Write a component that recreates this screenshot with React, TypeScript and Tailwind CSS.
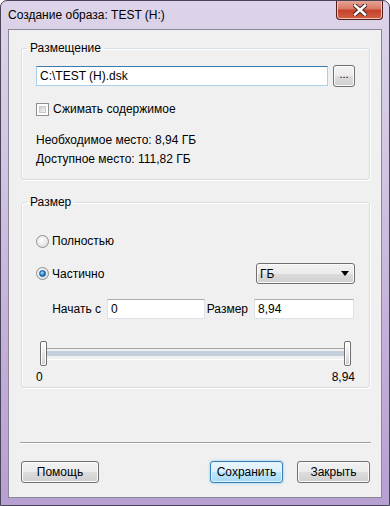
import React from "react"

const ui = "font-['Segoe_UI','Liberation_Sans',sans-serif] text-[12px] leading-[16px] text-black"

function WinButton({ children, primary, className = "" }: { children: React.ReactNode; primary?: boolean; className?: string }) {
  return (
    <button
      className={`h-[22px] rounded-[3px] border flex items-center justify-center ${
        primary
          ? "border-[#3c7fb1] bg-[linear-gradient(to_bottom,#eaf6fd_0%,#d9f0fc_50%,#bee6fd_51%,#a7d9f5_100%)] shadow-[inset_0_0_0_1px_#dcf2fc,0_0_3px_#7dcdf2]"
          : "border-[#707070] bg-[linear-gradient(to_bottom,#f2f2f2_0%,#ebebeb_50%,#dddddd_51%,#cfcfcf_100%)] shadow-[inset_0_0_0_1px_#fbfbfb]"
      } ${className}`}
    >
      {children}
    </button>
  )
}

function TextBox({ value, focused, className = "" }: { value: string; focused?: boolean; className?: string }) {
  return (
    <div
      className={`h-[20px] bg-white border flex items-center pl-[3px] ${
        focused
          ? "border-[#a9d0ea] border-t-[#3d7bad]"
          : "border-[#dde1e8] border-t-[#abadb3]"
      } ${className}`}
    >
      {value}
    </div>
  )
}

function Radio({ checked }: { checked?: boolean }) {
  return (
    <span className="w-[13px] h-[13px] rounded-full border border-[#8e8f8f] bg-[radial-gradient(circle_at_40%_40%,#ffffff,#d6d6d6)] flex items-center justify-center">
      {checked && (
        <span className="w-[7px] h-[7px] rounded-full bg-[radial-gradient(circle_at_40%_35%,#b8e6ff_0%,#2a8ad4_50%,#0b4f96_100%)] border border-[#10508f]" />
      )}
    </span>
  )
}

function Thumb() {
  return <span className="w-[7px] h-[25px] rounded-[2px] border border-[#6f6f6f] bg-[linear-gradient(to_bottom,#fefefe,#e4e4e4_60%,#cfcfcf)] shadow-[inset_0_0_0_1px_#ffffff]" />
}

function Group({ title, children }: { title: string; children: React.ReactNode }) {
  return (
    <fieldset className="border border-[#d5dfe5] rounded-[3px] shadow-[inset_1px_1px_0_#ffffff,1px_1px_0_#ffffff]">
      <legend className="ml-[5px] px-[3px] leading-[15px]">{title}</legend>
      <div className="px-[14px]">{children}</div>
    </fieldset>
  )
}

export default function App() {
  return (
    <div className={`${ui} w-[390px] h-[506px] flex flex-col rounded-t-[7px] border border-[#4a4458] bg-[linear-gradient(to_bottom,#ddd4e9_0%,#d3c6e3_30%,#c2aed9_70%,#b7a0d2_100%)] overflow-hidden`}>
      {/* title bar */}
      <div className="h-[28px] flex shrink-0">
        <div className="flex-1 pl-[7px] pt-[6px] text-[12px]">Создание образа: TEST (H:)</div>
        <button className="w-[47px] h-[20px] mr-[6px] -mt-px rounded-b-[4px] border border-[#4e1d1d] border-t-0 bg-[linear-gradient(to_bottom,#e9a99b_0%,#d97a66_45%,#c4412c_55%,#d4613f_100%)] shadow-[inset_0_0_0_1px_#f3c3b5] flex items-center justify-center">
          <svg width="14" height="12" viewBox="0 0 14 12">
            <path d="M2 1.5 L12 10.5 M12 1.5 L2 10.5" stroke="#4a2424" strokeWidth="4.5" strokeLinecap="square" />
            <path d="M2 1.5 L12 10.5 M12 1.5 L2 10.5" stroke="#ffffff" strokeWidth="2.5" strokeLinecap="square" />
          </svg>
        </button>
      </div>

      {/* client area */}
      <div className="flex-1 mx-[7px] mb-[7px] border border-[#8c8796] bg-[#f0f0f0] pl-[12px] pr-[11px] pt-[11px] pb-[13px] flex flex-col">
        <Group title="Размещение">
          <div className="mt-[9px] flex items-center gap-[5px]">
            <TextBox value="C:\TEST (H).dsk" focused className="flex-1" />
            <WinButton className="w-[22px] h-[18px] text-[11px] leading-none pb-[4px]">...</WinButton>
          </div>
          <div className="mt-[14px] flex items-center gap-[4px] h-[16px]">
            <span className="w-[13px] h-[13px] border border-[#8e8f8f] bg-white p-[2px] flex">
              <span className="flex-1 border border-[#c7c9cc] bg-[linear-gradient(135deg,#c9ccd1,#f4f4f4)]" />
            </span>
            Сжимать содержимое
          </div>
          <div className="mt-[15px]">Необходимое место: 8,94 ГБ</div>
          <div className="mt-[3px] pb-[12px]">Доступное место: 111,82 ГБ</div>
        </Group>

        <div className="mt-[15px]">
          <Group title="Размер">
            <div className="mt-[23px] flex items-center gap-[3px] h-[16px]">
              <Radio />
              Полностью
            </div>
            <div className="mt-[14px] flex items-center h-[21px]">
              <div className="flex items-center gap-[3px] flex-1">
                <Radio checked />
                Частично
              </div>
              <div className="w-[99px] h-[21px] rounded-[3px] border border-[#707070] bg-[linear-gradient(to_bottom,#f2f2f2_0%,#ebebeb_50%,#dddddd_51%,#cfcfcf_100%)] shadow-[inset_0_0_0_1px_#fbfbfb] flex items-center justify-between pl-[3px] pr-[5px]">
                <span>ГБ</span>
                <svg width="8" height="5" viewBox="0 0 8 5">
                  <path d="M0 0 H8 L4 5 Z" fill="#000" />
                </svg>
              </div>
            </div>
            <div className="mt-[15px] flex items-center">
              <div className="w-[71px] text-right pr-[6px]">Начать с</div>
              <TextBox value="0" className="w-[98px]" />
              <div className="w-[49px] text-right pr-[6px]">Размер</div>
              <TextBox value="8,94" className="w-[100px]" />
            </div>
            <div className="mt-[22px] mx-[4px] flex items-center">
              <Thumb />
              <div className="flex-1 h-[12px] border-t border-[#a7a7a7] border-b border-b-[#ffffff]">
                <div className="mt-[2px] h-[5px] bg-[#c3cfdc]" />
              </div>
              <Thumb />
            </div>
            <div className="mt-[3px] pb-[2px] flex justify-between">
              <span>0</span>
              <span>8,94</span>
            </div>
          </Group>
        </div>

        <div className="mt-[54px] -mx-px border-t border-[#a0a0a0] border-b border-b-[#ffffff]" />

        <div className="mt-[17px] flex">
          <WinButton className="w-[78px]">Помощь</WinButton>
          <div className="flex-1" />
          <WinButton primary className="w-[73px]">Сохранить</WinButton>
          <WinButton className="w-[73px] ml-[14px]">Закрыть</WinButton>
        </div>
      </div>
    </div>
  )
}
